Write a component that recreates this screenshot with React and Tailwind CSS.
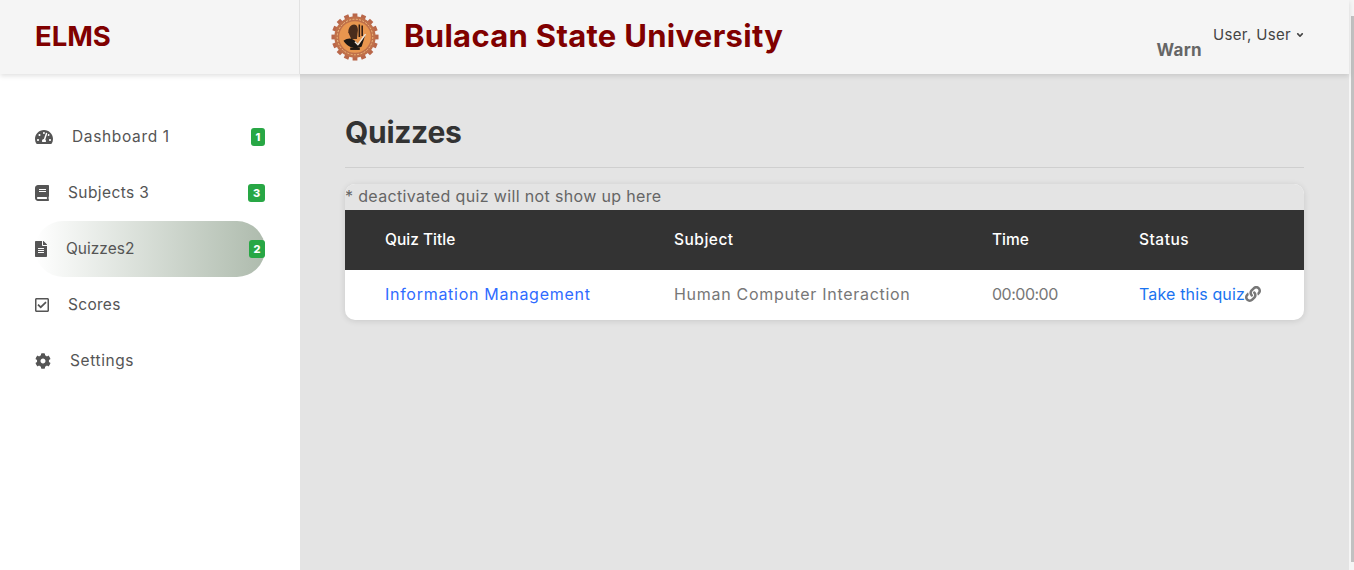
import { FaTachometerAlt, FaBook, FaFileAlt, FaRegCheckSquare, FaCog, FaLink, FaAngleDown } from 'react-icons/fa'

const navItems = [
  { label: 'Dashboard 1', icon: FaTachometerAlt, iconW: 'w-[18px]', badge: '1', track: 'tracking-[0.65px]', badgeW: 'w-[14px]' },
  { label: 'Subjects 3', icon: FaBook, iconW: 'w-[14px]', badge: '3', track: 'tracking-[0.4px]', badgeW: 'w-[17px]' },
  { label: 'Quizzes2', icon: FaFileAlt, iconW: 'w-[12px]', badge: '2', track: 'tracking-normal', badgeW: 'w-[16px]', active: true },
  { label: 'Scores', icon: FaRegCheckSquare, iconW: 'w-[14px]', track: 'tracking-[0.3px]' },
  { label: 'Settings', icon: FaCog, iconW: 'w-[16px]', track: 'tracking-[0.6px]' },
]

function Logo() {
  const teeth = Array.from({ length: 16 }, (_, i) => (i * 360) / 16)
  return (
    <svg width="48" height="48" viewBox="0 0 50 50" className="shrink-0 blur-[0.5px]">
      {teeth.map((a) => (
        <rect key={a} x="22.5" y="0.5" width="5" height="6" fill="#b9674a" transform={`rotate(${a} 25 25)`} />
      ))}
      <circle cx="25" cy="25" r="21.5" fill="#c0704a" />
      <circle cx="25" cy="25" r="16.5" fill="#e8964f" />
      <circle cx="25" cy="25" r="18.5" fill="none" stroke="#f0c080" strokeWidth="1" strokeDasharray="2 1.5" />
      <path d="M18 20c0-5 3-8 6-8s4 3 4 6l-1 9h-6z" fill="#4a2c1c" />
      <path d="M29.5 12v13M32.5 13v11" stroke="#2e1a12" strokeWidth="1.6" />
      <path d="M13 29c5-4 10-3 13 1l3 3 7-11-4 13c-6 3-14 2-19-6z" fill="#1c1714" />
      <path d="M25 30l3 3 8-11" fill="none" stroke="#f2e6d8" strokeWidth="1.6" />
      <rect x="20" y="36" width="10" height="2.5" fill="#231a14" />
    </svg>
  )
}

function NavItem({ item }) {
  const Icon = item.icon
  return (
    <div className={`flex h-14 items-center text-[#555] ${item.active ? 'rounded-[28px] bg-gradient-to-r from-white to-[#aebbad]' : ''}`}>
      <Icon className={`mb-px h-4 shrink-0 ${item.iconW}`} />
      <span className={`ml-[19px] flex-1 text-[15.5px] ${item.track}`}>{item.label}</span>
      {item.badge && (
        <span className={`flex h-[18px] items-center justify-center rounded-[3px] bg-[#28a745] text-[11px] font-extrabold leading-none text-white ${item.badgeW}`}>
          {item.badge}
        </span>
      )}
    </div>
  )
}

export default function App() {
  return (
    <div className="flex h-[570px] w-full overflow-hidden bg-[#e4e4e4] font-['Inter','Liberation_Sans',sans-serif]">
      <div className="flex min-w-0 flex-1 flex-col">
        <header className="z-10 flex h-[74px] shrink-0 bg-[#f5f5f5] shadow-[0_2px_5px_rgba(0,0,0,0.12)]">
          <div className="flex w-[300px] shrink-0 items-center border-r border-[#e2e2e2] pl-[35px]">
            <span className="text-[27.5px] font-bold text-[#800000]">ELMS</span>
          </div>
          <div className="flex flex-1 items-center pl-[31px]">
            <Logo />
            <span className="mb-1 ml-[25px] text-[31px] font-bold leading-none tracking-[0.3px] text-[#800000]">Bulacan State University</span>
            <div className="ml-auto mr-[44px] mt-[13px] flex items-start">
              <span className="mt-[14px] text-[17px] font-bold tracking-[0.3px] text-[#666]">Warn</span>
              <span className="ml-[11px] flex items-center gap-1 text-[15px] tracking-[0.35px] text-[#444]">
                User, User <FaAngleDown className="text-[10px]" />
              </span>
            </div>
          </div>
        </header>
        <div className="flex min-h-0 flex-1">
          <aside className="w-[300px] shrink-0 bg-white px-[35px] pt-[35px]">
            {navItems.map((item) => (
              <NavItem key={item.label} item={item} />
            ))}
          </aside>
          <main className="flex-1 pl-[45px] pr-[45px] pt-[38px]">
            <h1 className="border-b border-[#cfcfcf] pb-[15px] text-[30px] font-bold leading-[40px] tracking-[-0.3px] text-[#333]">Quizzes</h1>
            <div className="mt-4 overflow-hidden rounded-[10px] bg-white shadow-[0_1px_6px_rgba(0,0,0,0.12)]">
              <p className="bg-[#e4e4e4] pb-[2px] text-[16px] leading-[24px] tracking-[0.35px] text-[#666]">* deactivated quiz will not show up here</p>
              <div className="grid h-[60px] grid-cols-[289px_318px_147px_1fr] items-center bg-[#333] pl-10 text-[15.5px] font-medium text-white">
                <span>Quiz Title</span>
                <span className="tracking-[0.5px]">Subject</span>
                <span>Time</span>
                <span className="tracking-[0.5px]">Status</span>
              </div>
              <div className="grid h-[50px] grid-cols-[289px_318px_147px_1fr] items-center pb-[2px] pl-10 text-[16px] text-[#777]">
                <a className="tracking-[0.72px] text-[#2f6bff]">Information Management</a>
                <span className="tracking-[0.7px]">Human Computer Interaction</span>
                <span className="tracking-[-0.5px]">00:00:00</span>
                <span className="flex items-center">
                  <a className="tracking-[0.15px] text-[#1a73f0]">Take this quiz</a>
                  <FaLink className="text-[16px] text-[#777]" />
                </span>
              </div>
            </div>
          </main>
        </div>
      </div>
      <div className="flex w-[5px] shrink-0 flex-col items-end bg-[#f5f5f5]">
        <div className="mt-[16px] h-[546px] w-[3px] bg-[#c1c1c1]" />
      </div>
    </div>
  )
}
